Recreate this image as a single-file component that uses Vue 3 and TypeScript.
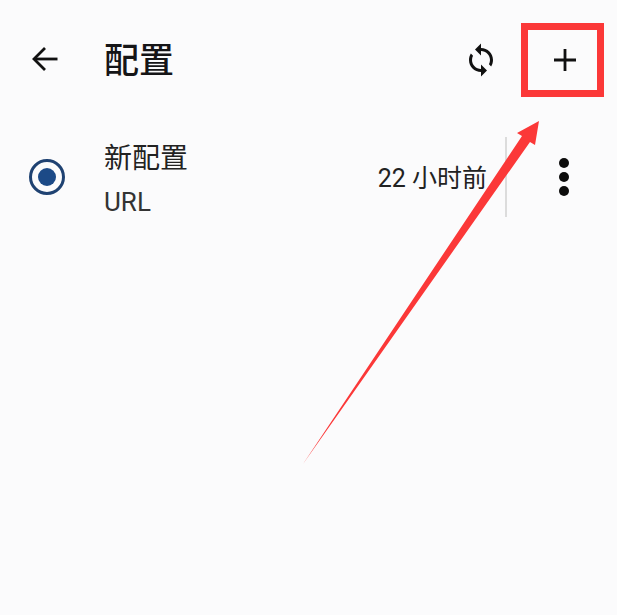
<script setup lang="ts">
const profile = { name: '新配置', type: 'URL', updated: '22 小时前' };
</script>

<template>
	<div class="page">
		<header class="bar">
			<button class="lead" aria-label="返回">
				<svg width="30" height="30" viewBox="0 0 30 30" fill="none" stroke="#111" stroke-width="2.8">
					<path d="M27.5 14H4.5" />
					<path d="M15 3 4 14l11 11" />
				</svg>
			</button>
			<h1 class="title">配置</h1>
			<button class="action" aria-label="更新">
				<svg width="36" height="36" viewBox="0 0 24 24" fill="#111">
					<path d="M12 4V1L8 5l4 4V6c3.31 0 6 2.69 6 6 0 1.01-.25 1.97-.7 2.8l1.46 1.46C19.54 15.03 20 13.57 20 12c0-4.42-3.58-8-8-8zm0 14c-3.31 0-6-2.69-6-6 0-1.01.25-1.97.7-2.8L5.24 7.74C4.46 8.97 4 10.43 4 12c0 4.42 3.58 8 8 8v3l4-4-4-4v3z" />
				</svg>
			</button>
			<button class="action" aria-label="添加">
				<svg width="22" height="22" viewBox="0 0 22 22" stroke="#111" stroke-width="2.8">
					<path d="M11 0v22M0 11h22" />
				</svg>
			</button>
		</header>

		<section class="row">
			<div class="lead">
				<span class="radio"><span class="dot" /></span>
			</div>
			<div class="info">
				<div class="name">{{ profile.name }}</div>
				<div class="type">{{ profile.type }}</div>
			</div>
			<div class="time">{{ profile.updated }}</div>
			<div class="more" aria-label="更多">
				<span /><span /><span />
			</div>
		</section>

		<!-- annotation drawn over the screenshot -->
		<div class="mark" />
		<svg class="pointer" width="617" height="615" viewBox="0 0 617 615">
			<path d="M303 464 522 136 517 133 539 121 535 145 530 142Z" fill="#fb3838" />
		</svg>
	</div>
</template>

<style scoped>
.page {
	position: relative;
	width: 617px;
	height: 615px;
	overflow: hidden;
	background: #fbfbfc;
	color: #1b1b1d;
	font-family: Roboto, 'Noto Sans CJK SC', sans-serif;
}

button {
	padding: 0;
	border: 0;
	background: none;
}

.bar {
	display: flex;
	align-items: center;
	height: 120px;
	padding-right: 10px;
}

.lead {
	display: flex;
	flex: none;
	align-items: center;
	justify-content: center;
	width: 90px;
	margin-right: 14px;
}

.title {
	flex: 1;
	margin: 0;
	padding-top: 3px;
	font-size: 35px;
	font-weight: 500;
	line-height: 40px;
	color: #151517;
}

.action {
	display: flex;
	flex: none;
	align-items: center;
	justify-content: center;
	width: 84px;
	height: 80px;
}

.row {
	display: flex;
	align-items: center;
	height: 114px;
}

.radio {
	display: flex;
	align-items: center;
	justify-content: center;
	box-sizing: border-box;
	width: 36px;
	height: 36px;
	margin-left: 4px;
	border: 3.5px solid #1f4272;
	border-radius: 50%;
}

.dot {
	width: 18px;
	height: 18px;
	border-radius: 50%;
	background: #1c4a87;
}

.info {
	flex: 1;
	display: flex;
	flex-direction: column;
	gap: 9px;
	padding-top: 5px;
}

.name {
	font-size: 28px;
	line-height: 36px;
	color: #222;
}

.type {
	font-size: 26px;
	line-height: 32px;
	color: #333;
}

.time {
	box-sizing: border-box;
	height: 80px;
	padding-right: 18px;
	border-right: 2px solid #dcdcdc;
	font-size: 25px;
	line-height: 84px;
	color: #222;
}

.more {
	display: flex;
	flex: none;
	flex-direction: column;
	align-items: center;
	gap: 4px;
	width: 114px;
	margin-right: -4px;
}

.more span {
	width: 10px;
	height: 10px;
	border-radius: 50%;
	background: #0c0c0c;
}

.mark {
	position: absolute;
	left: 521px;
	top: 23px;
	box-sizing: border-box;
	width: 83px;
	height: 74px;
	border: 7px solid #fb3838;
}

.pointer {
	position: absolute;
	left: 0;
	top: 0;
}
</style>
